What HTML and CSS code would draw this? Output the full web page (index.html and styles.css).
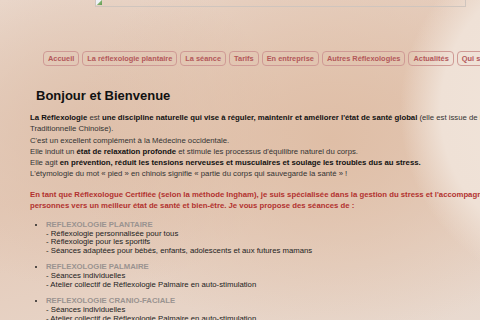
FILE: index.html
```html
<!DOCTYPE html>
<html lang="fr">
<head>
    <meta charset="UTF-8">
    <title>Réflexologie</title>
    <link rel="stylesheet" href="styles.css">
</head>
<body>
    <div class="page">
        <div class="banner"><span class="broken"></span></div>

        <ul class="menu">
            <li><a href="#">Accueil</a></li>
            <li><a href="#">La réflexologie plantaire</a></li>
            <li><a href="#">La séance</a></li>
            <li><a href="#">Tarifs</a></li>
            <li><a href="#">En entreprise</a></li>
            <li><a href="#">Autres Réflexologies</a></li>
            <li><a href="#">Actualités</a></li>
            <li><a href="#">Qui suis-je ?</a></li>
            <li><a href="#">Contact</a></li>
        </ul>

        <div class="content">
            <h1>Bonjour et Bienvenue</h1>

            <p class="intro">
                <b>La Réflexologie</b> est <b>une discipline naturelle qui vise à réguler, maintenir et améliorer l'état de santé global</b> (elle est issue de la Médecine Traditionnelle Chinoise).<br>
                C'est un excellent complément à la Médecine occidentale.<br>
                Elle induit un <b>état de relaxation profonde</b> et stimule les processus d'équilibre naturel du corps.<br>
                Elle agit <b>en prévention, réduit les tensions nerveuses et musculaires et soulage les troubles dus au stress.</b><br>
                L'étymologie du mot « pied » en chinois signifie « partie du corps qui sauvegarde la santé » !
            </p>

            <p class="offer">
                En tant que Réflexologue Certifiée (selon la méthode Ingham), je suis spécialisée dans la gestion du stress et l'accompagnement des personnes vers un meilleur état de santé et bien-être. Je vous propose des séances de :
            </p>

            <ul class="services">
                <li>
                    <span class="kind">REFLEXOLOGIE PLANTAIRE</span><br>
                    - Réflexologie personnalisée pour tous<br>
                    - Réflexologie pour les sportifs<br>
                    - Séances adaptées pour bébés, enfants, adolescents et aux futures mamans
                </li>
                <li>
                    <span class="kind">REFLEXOLOGIE PALMAIRE</span><br>
                    - Séances individuelles<br>
                    - Atelier collectif de Réflexologie Palmaire en auto-stimulation
                </li>
                <li>
                    <span class="kind">REFLEXOLOGIE CRANIO-FACIALE</span><br>
                    - Séances individuelles<br>
                    - Atelier collectif de Réflexologie Palmaire en auto-stimulation
                </li>
            </ul>
        </div>
    </div>
</body>
</html>
```

FILE: styles.css
```css
body {
    margin: 0;
    font-family: 'Liberation Sans', Arial, sans-serif;
    color: #222;
    background-color: #e4cdbd;
    background-image:
        radial-gradient(circle 185px at 585px 110px, #f1e5db 0%, #efe1d6 78%, rgba(236,220,208,0) 100%),
        radial-gradient(ellipse 260px 200px at 330px 140px, #dfbea6 0%, rgba(223,190,166,0) 100%),
        radial-gradient(ellipse 200px 160px at 90px 130px, #dec0ab 0%, rgba(222,192,171,0) 100%),
        linear-gradient(165deg, #ead8cc 0%, #e4c9b7 45%, #e9dbd1 100%);
    min-height: 320px;
}
.page {
    width: 660px;
}
.banner {
    margin-left: 95px;
    width: 369px;
    height: 6px;
    border: 1px solid #cfc5be;
    border-top: none;
}
.broken {
    display: block;
    width: 6px;
    height: 5px;
    background: linear-gradient(135deg, #eef2f6 0%, #eef2f6 45%, #7fb06a 60%, #5f9a55 100%);
}
.menu {
    list-style: none;
    margin: 44px 0 0 43px;
    padding: 0;
    display: flex;
    gap: 3px;
    white-space: nowrap;
}
.menu a {
    display: block;
    font-size: 7.4px;
    font-weight: bold;
    color: #b3585a;
    text-decoration: none;
    padding: 2px 4px;
    line-height: 9px;
    border: 1px solid #cf9a95;
    border-radius: 4px;
}
.content {
    padding-left: 30px;
}
h1 {
    font-size: 13px;
    margin: 22px 0 9px 6px;
    color: #111;
}
.intro,
.offer {
    font-size: 7.75px;
    line-height: 11.3px;
    margin: 0;
    width: 500px;
}
.intro {
    color: #333;
}
.intro b {
    color: #111;
}
.offer {
    margin-top: 9px;
    color: #b2322f;
    font-weight: bold;
    line-height: 11px;
}
.services {
    margin: 10px 0 0;
    padding-left: 16px;
    font-size: 7.75px;
    line-height: 8.8px;
    color: #222;
}
.services li {
    margin-bottom: 7.5px;
}
.kind {
    font-weight: bold;
    color: #9a9390;
}
```
